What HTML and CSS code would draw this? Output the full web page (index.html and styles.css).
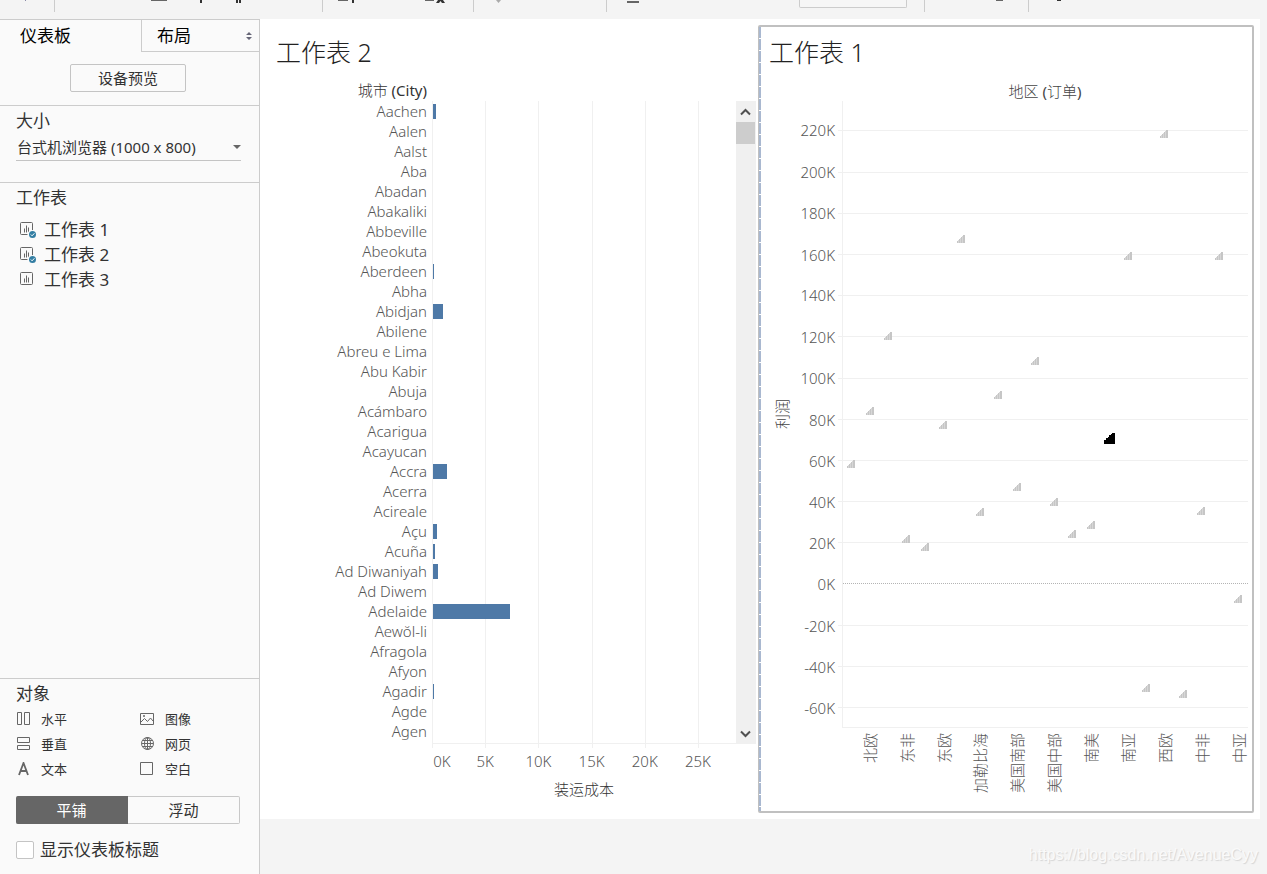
FILE: index.html
```html
<!DOCTYPE html>
<html lang="zh-CN">
<head>
<meta charset="utf-8">
<meta name="viewport" content="width=device-width, initial-scale=1">
<title>仪表板</title>
<link rel="stylesheet" href="styles.css">
</head>
<body>
<svg class="defs" aria-hidden="true">
  <symbol id="mark" viewBox="0 0 8 8"><path d="M0 6h1v2H0zM2 4h1v4H2zM4 2h1v6H4zM6 0h2v8H6z"/><path opacity=".7" d="M1 5h1v3H1zM3 3h1v5H3zM5 1h1v7H5z"/></symbol>
  <symbol id="mark-picked" viewBox="0 0 11 11"><path d="M0 7h2V5h2V4h1V2h2V1h1V0h3v11H0z"/></symbol>
  <symbol id="sheet" viewBox="0 0 16 16"><path fill="none" stroke="#666" d="M.5 1.500q0-1 1-1h10q1 0 1 1v10q0 1-1 1h-10q-1 0-1-1zM4.500 6.500v4M6.500 3.500v7M8.500 5.500v5"/></symbol>
  <symbol id="used" viewBox="0 0 16 16"><circle cx="12" cy="12.500" r="4.500" fill="#fafafa"/><circle cx="12.500" cy="12.500" r="3.500" fill="#337ea3"/><path fill="none" stroke="#fff" d="M10.800 12.500l1.300 1.300 2.300-2.500"/></symbol>
</svg>

<header class="toolbar">
  <div class="group g1"><svg width="54" height="12"><path fill="#8a8aa8" d="M25 0h1v1h-1z"/></svg></div>
  <div class="group g2"><svg width="267" height="12"><path fill="#666" d="M96 0h16v1H96z"/><path fill="#333" d="M145 0h2v3h-2zM181 0h2v3h-2zM184 0h2v3h-2z"/></svg></div>
  <div class="group g3"><svg width="150" height="12"><path fill="#666" d="M15 0h10v1H15zM102 0h9v1h-9z"/><path fill="#333" d="M29 0h2v3h-2zM115 0h5l2 3h-3l-1.500-2-1.500 2h-3z"/></svg></div>
  <div class="group g4"><svg width="132" height="12"><path fill="#aaa" d="M22 0h5l-2.500 3z"/></svg></div>
  <div class="group g5"><svg width="60" height="12"><path fill="#666" d="M20 1h12v2H20z"/></svg><select class="fit" aria-label="适合"><option></option></select></div>
  <div class="group g6"><svg width="103" height="12"><path fill="#666" d="M71 0h7v1h-7z"/></svg></div>
  <div class="group g7"><svg width="60" height="12"><path fill="#333" d="M28 0h4v1h-4z"/></svg></div>
</header>

<div class="workspace">
  <aside class="sidebar">
    <div class="tabs">
      <button class="tab" type="button">仪表板</button>
      <button class="tab tab-off" type="button">布局<svg width="6" height="8" viewBox="0 0 6 8"><path fill="#667" d="M0 3l3-3 3 3zM0 5h6L3 8z"/></svg></button>
    </div>
    <div class="preview"><button type="button">设备预览</button></div>
    <section class="size">
      <label class="heading" for="size">大小</label>
      <div class="size-field">
        <select id="size"><option>台式机浏览器 (1000 x 800)</option></select>
        <svg width="8" height="4" viewBox="0 0 8 4"><path fill="#666" d="M0 0h8L4 4z"/></svg>
      </div>
    </section>
    <section class="sheets">
      <h2 class="heading">工作表</h2>
      <button type="button"><svg width="16" height="16"><use href="#sheet"/><use href="#used"/></svg>工作表 1</button>
      <button type="button"><svg width="16" height="16"><use href="#sheet"/><use href="#used"/></svg>工作表 2</button>
      <button type="button"><svg width="16" height="16"><use href="#sheet"/></svg>工作表 3</button>
    </section>
    <section class="objects">
      <h2 class="heading">对象</h2>
      <div class="object-grid">
        <button type="button"><svg width="15" height="14"><path fill="none" stroke="#666" d="M1.500.5h4v12h-4zM8.500.5h5v12h-5z"/></svg>水平</button>
        <button type="button"><svg width="15" height="14"><path fill="none" stroke="#666" d="M.5 1.500h13v11H.5zM1 10l3.500-3.500 3 3 3-3.500L13 9"/><circle cx="4" cy="4" r="1" fill="#666"/></svg>图像</button>
        <button type="button"><svg width="15" height="14"><path fill="none" stroke="#666" d="M1.500.5h12v5h-12zM1.500 8.500h12v4h-12z"/></svg>垂直</button>
        <button type="button"><svg width="15" height="14"><g fill="none" stroke="#666"><circle cx="7.500" cy="6.500" r="6"/><ellipse cx="7.500" cy="6.500" rx="3" ry="6"/><path d="M7.500.5v12M1.500 6.500h12M2.500 3.500h10M2.500 9.500h10"/></g></svg>网页</button>
        <button type="button"><svg width="15" height="14"><path fill="none" stroke="#666" stroke-width="1.800" d="M3 13L7.500 1 12 13M4.500 9h6"/></svg>文本</button>
        <button type="button"><svg width="15" height="14"><path fill="none" stroke="#666" d="M.5.5h12v12H.5z"/></svg>空白</button>
      </div>
      <div class="segmented">
        <button class="on" type="button">平铺</button>
        <button type="button">浮动</button>
      </div>
      <label class="show-title"><input type="checkbox">显示仪表板标题</label>
    </section>
  </aside>

  <main class="canvas">
    <div class="dashboard">
      <section class="view">
        <h1 class="title">工作表 2</h1>
        <div class="bar-head">城市 <b>(City)</b></div>
        <div class="bar-area">
          <div class="bar-plot">
            <div class="bar-grid"><i></i><i></i><i></i><i></i><i></i><i></i></div>
            <div class="row"><span>Aachen</span><div><div class="bar" style="width:1%"></div></div></div>
            <div class="row"><span>Aalen</span></div>
            <div class="row"><span>Aalst</span></div>
            <div class="row"><span>Aba</span></div>
            <div class="row"><span>Abadan</span></div>
            <div class="row"><span>Abakaliki</span></div>
            <div class="row"><span>Abbeville</span></div>
            <div class="row"><span>Abeokuta</span></div>
            <div class="row"><span>Aberdeen</span><div><div class="bar" style="width:0.3%"></div></div></div>
            <div class="row"><span>Abha</span></div>
            <div class="row"><span>Abidjan</span><div><div class="bar" style="width:3.300%"></div></div></div>
            <div class="row"><span>Abilene</span></div>
            <div class="row"><span>Abreu e Lima</span></div>
            <div class="row"><span>Abu Kabir</span></div>
            <div class="row"><span>Abuja</span></div>
            <div class="row"><span>Acámbaro</span></div>
            <div class="row"><span>Acarigua</span></div>
            <div class="row"><span>Acayucan</span></div>
            <div class="row"><span>Accra</span><div><div class="bar" style="width:4.600%"></div></div></div>
            <div class="row"><span>Acerra</span></div>
            <div class="row"><span>Acireale</span></div>
            <div class="row"><span>Açu</span><div><div class="bar" style="width:1.300%"></div></div></div>
            <div class="row"><span>Acuña</span><div><div class="bar" style="width:0.700%"></div></div></div>
            <div class="row"><span>Ad Diwaniyah</span><div><div class="bar" style="width:1.700%"></div></div></div>
            <div class="row"><span>Ad Diwem</span></div>
            <div class="row"><span>Adelaide</span><div><div class="bar" style="width:25.400%"></div></div></div>
            <div class="row"><span>Aewŏl-li</span></div>
            <div class="row"><span>Afragola</span></div>
            <div class="row"><span>Afyon</span></div>
            <div class="row"><span>Agadir</span><div><div class="bar" style="width:0.3%"></div></div></div>
            <div class="row"><span>Agde</span></div>
            <div class="row"><span>Agen</span></div>
          </div>
          <div class="scrollbar">
            <button type="button" aria-label="向上滚动"><svg width="11" height="8"><path fill="none" stroke="#505050" stroke-width="2" d="M1 6.500l4.500-4.500L10 6.500"/></svg></button>
            <div class="thumb"></div>
            <button class="down" type="button" aria-label="向下滚动"><svg width="11" height="8"><path fill="none" stroke="#505050" stroke-width="2" d="M1 1.500L5.500 6 10 1.500"/></svg></button>
          </div>
        </div>
        <div class="bar-axis"><span>0K</span><span>5K</span><span>10K</span><span>15K</span><span>20K</span><span>25K</span></div>
        <div class="bar-caption">装运成本</div>
      </section>

      <section class="view selected">
        <h1 class="title">工作表 1</h1>
        <div class="region-head">地区 <b>(</b>订单<b>)</b></div>
        <div class="scatter">
          <div class="y-title"><span>利润</span></div>
          <div class="y-axis">
            <span style="top:4.700%">220K</span><span style="top:11.300%">200K</span><span style="top:17.900%">180K</span><span style="top:24.500%">160K</span><span style="top:31%">140K</span><span style="top:37.600%">120K</span><span style="top:44.200%">100K</span><span style="top:50.800%">80K</span><span style="top:57.400%">60K</span><span style="top:63.900%">40K</span><span style="top:70.500%">20K</span><span style="top:77%">0K</span><span style="top:83.700%">-20K</span><span style="top:90.300%">-40K</span><span style="top:96.800%">-60K</span>
          </div>
          <div class="points">
            <i style="top:4.700%"></i><i style="top:11.300%"></i><i style="top:17.900%"></i><i style="top:24.500%"></i><i style="top:31%"></i><i style="top:37.600%"></i><i style="top:44.200%"></i><i style="top:50.800%"></i><i style="top:57.400%"></i><i style="top:63.900%"></i><i style="top:70.500%"></i><i class="zero" style="top:77%"></i><i style="top:83.700%"></i><i style="top:90.300%"></i><i style="top:96.800%"></i>
            <svg style="left:2.300%;top:58%"><use href="#mark"/></svg>
            <svg style="left:6.800%;top:49.500%"><use href="#mark"/></svg>
            <svg style="left:11.400%;top:37.600%"><use href="#mark"/></svg>
            <svg style="left:15.900%;top:69.900%"><use href="#mark"/></svg>
            <svg style="left:20.500%;top:71.200%"><use href="#mark"/></svg>
            <svg style="left:25%;top:51.800%"><use href="#mark"/></svg>
            <svg style="left:29.500%;top:22.100%"><use href="#mark"/></svg>
            <svg style="left:34.100%;top:65.700%"><use href="#mark"/></svg>
            <svg style="left:38.600%;top:47%"><use href="#mark"/></svg>
            <svg style="left:43.200%;top:61.700%"><use href="#mark"/></svg>
            <svg style="left:47.700%;top:41.500%"><use href="#mark"/></svg>
            <svg style="left:52.300%;top:64.100%"><use href="#mark"/></svg>
            <svg style="left:56.800%;top:69.200%"><use href="#mark"/></svg>
            <svg style="left:61.400%;top:67.800%"><use href="#mark"/></svg>
            <svg class="picked" style="left:65.900%;top:53.900%"><use href="#mark-picked"/></svg>
            <svg style="left:70.500%;top:24.700%"><use href="#mark"/></svg>
            <svg style="left:75%;top:93.700%"><use href="#mark"/></svg>
            <svg style="left:79.500%;top:5.200%"><use href="#mark"/></svg>
            <svg style="left:84.100%;top:94.800%"><use href="#mark"/></svg>
            <svg style="left:88.600%;top:65.500%"><use href="#mark"/></svg>
            <svg style="left:93.200%;top:24.800%"><use href="#mark"/></svg>
            <svg style="left:97.700%;top:79.500%"><use href="#mark"/></svg>
          </div>
          <div class="x-axis">
            <div><span>北欧</span></div><div><span>东非</span></div><div><span>东欧</span></div><div><span>加勒比海</span></div><div><span>美国南部</span></div><div><span>美国中部</span></div><div><span>南美</span></div><div><span>南亚</span></div><div><span>西欧</span></div><div><span>中非</span></div><div><span>中亚</span></div>
          </div>
        </div>
      </section>
    </div>
    <footer class="watermark">https://blog.csdn.net/AvenueCyy</footer>
  </main>
</div>
</body>
</html>
```
FILE: styles.css
```css
* { box-sizing: border-box; }
body {
  margin: 0;
  min-height: 100vh;
  display: flex;
  flex-direction: column;
  background: #f4f4f4;
  color: #333;
  font-family: "Noto Sans", "Noto Sans CJK SC", sans-serif;
  font-size: 15px;
  line-height: 20px;
}
button, select, input { font: inherit; color: inherit; margin: 0; }
button { background: none; border: 0; padding: 0; }
h1, h2 { margin: 0; font-weight: 400; }
svg { display: block; flex: none; }
.defs { position: absolute; width: 0; height: 0; }

.toolbar { display: flex; height: 19px; overflow: hidden; }
.group { display: flex; flex: none; height: 12px; border-right: 1px solid #ccc; }
.g1 { width: 55px; }
.g2 { width: 268px; }
.g3 { width: 151px; }
.g4 { width: 133px; }
.g5 { width: 318px; justify-content: space-between; padding-right: 17px; }
.g6 { width: 104px; }
.g7 { border: 0; }
.fit {
  appearance: none;
  width: 108px;
  height: 8px;
  padding: 0;
  border: 1px solid #ccc;
  border-top: 0;
  border-radius: 0 0 2px 2px;
  background: #f6f6f6;
}

.workspace { flex: 1; display: flex; }
.sidebar {
  width: 260px;
  flex: none;
  display: flex;
  flex-direction: column;
  background: #fafafa;
  border-top: 1px solid #ccc;
  border-right: 1px solid #ccc;
}
.heading { display: block; font-size: 17px; line-height: 24px; }
.tabs { display: grid; grid-template-columns: 141fr 118fr; height: 32px; color: #000; font-size: 17px; }
.tab { padding-left: 20px; text-align: left; }
.tab-off {
  display: flex;
  align-items: center;
  justify-content: space-between;
  padding: 0 7px 0 15px;
  border-left: 1px solid #ccc;
  border-bottom: 1px solid #ccc;
}
.preview { display: flex; justify-content: center; padding: 12px 3px 13px 0; }
.preview button {
  width: 116px;
  height: 28px;
  border: 1px solid #c4c4c4;
  border-radius: 2px;
}
.size { border-top: 1px solid #ccc; padding: 3px 18px 21px 16px; }
.size-field { position: relative; border-bottom: 1px solid #c4c4c4; }
.size-field select {
  appearance: none;
  width: 100%;
  height: 27px;
  padding: 0 16px 0 1px;
  border: 0;
  background: transparent;
}
.size-field svg { position: absolute; right: 0; top: 12px; pointer-events: none; }
.sheets {
  flex: 1;
  display: flex;
  flex-direction: column;
  border-top: 1px solid #ccc;
  padding: 3px 16px;
  font-size: 17px;
}
.sheets .heading { margin-bottom: 7px; }
.sheets button { display: flex; align-items: center; gap: 8px; height: 25px; padding-left: 4px; }
.objects { border-top: 1px solid #ccc; padding: 3px 19px 13px 16px; }
.object-grid { display: grid; grid-template-columns: 124px 1fr; font-size: 13px; }
.object-grid button { display: flex; align-items: center; gap: 10px; height: 25px; }
.segmented { display: flex; height: 28px; margin: 15px 0; }
.segmented button { flex: 1; border: 1px solid #c8c8c8; border-left: 0; border-radius: 0 2px 2px 0; }
.segmented .on { background: #666; border-color: #666; color: #fff; border-radius: 2px 0 0 2px; }
.show-title { display: flex; align-items: center; gap: 6px; font-size: 17px; line-height: 22px; }
.show-title input {
  appearance: none;
  width: 18px;
  height: 18px;
  background: #fff;
  border: 1px solid #c4c4c4;
  border-radius: 2px;
}

.canvas { flex: 1; min-width: 0; display: flex; flex-direction: column; }
.dashboard {
  flex: 1;
  display: grid;
  grid-template-columns: minmax(0, 498fr) minmax(0, 496fr);
  margin-right: 7px;
  padding: 6px 6px 6px 0;
  background: #fff;
}
.view { position: relative; display: flex; flex-direction: column; padding: 10px 0 0; font-weight: 300; color: #444; }
.title { font-size: 25px; line-height: 34px; margin: 0 16px 12px; font-weight: 300; color: #222; }
.view b { font-weight: 400; }
.selected { border: 2px solid #c0c0c0; border-left-width: 1px; border-radius: 2px; padding: 8px 4px 0 1px; }
.selected .title { margin-left: 9px; }
.selected::before {
  content: "";
  position: absolute;
  inset: 0 auto 0 0;
  width: 2px;
  background: repeating-linear-gradient(#a9b8d0 0 11px, #fff 11px 12px);
}

.bar-head { width: 167px; padding-bottom: 2px; line-height: 18px; text-align: right; color: #333; white-space: nowrap; }
.bar-area { display: flex; }
.bar-plot { position: relative; flex: 1; padding-bottom: 3px; color: #555; }
.bar-grid {
  position: absolute;
  inset: 0 0 -4px 172px;
  display: grid;
  grid-template-columns: repeat(5, 17.5%) 1fr;
}
.bar-grid i { border-left: 1px solid #f0f0f0; }
.bar-plot::after {
  content: "";
  position: absolute;
  inset: auto 0 0 172px;
  border-bottom: 1px solid #f0f0f0;
}
.row { position: relative; display: grid; grid-template-columns: 167px 1fr; column-gap: 6px; height: 20px; align-items: center; }
.row span { text-align: right; }
.bar { height: 15px; min-width: 1px; background: #4e79a7; }
.scrollbar { display: flex; flex-direction: column; width: 20px; margin-right: 2px; background: #f0f0f0; }
.scrollbar button { display: flex; align-items: center; justify-content: center; height: 21px; padding-right: 1px; }
.thumb { height: 22px; margin-right: 1px; background: #cdcdcd; }
.scrollbar .down { margin-top: auto; }
.bar-axis {
  display: grid;
  grid-template-columns: repeat(6, 17.5%);
  margin: 7px 22px 8px 172px;
  color: #555;
  text-align: center;
}
.bar-axis span { width: 52px; margin-left: -26px; }
.bar-axis span:first-child { padding-left: 20px; }
.bar-caption { margin-left: 150px; text-align: center; color: #333; }

.region-head { margin-left: 82px; text-align: center; color: #444; }
.scatter {
  flex: 1;
  display: grid;
  grid-template-columns: 44px 38px minmax(0, 1fr);
  grid-template-rows: 1fr 83px;
}
.y-title { display: flex; align-items: center; justify-content: center; }
.y-title span, .x-axis span {
  writing-mode: vertical-rl;
  text-orientation: sideways;
  transform: rotate(180deg);
}
.y-axis { position: relative; color: #555; }
.y-axis span { position: absolute; right: 7px; margin-top: -10px; white-space: nowrap; }
.points { position: relative; border-left: 1px solid #f0f0f0; border-bottom: 1px solid #f0f0f0; }
.points i { position: absolute; left: -5px; right: 0; border-top: 1px solid #f0f0f0; }
.points .zero { left: 0; border-top: 1px dotted #b4b4b4; }
.points svg { position: absolute; width: 8px; height: 8px; margin: -4px 0 0 -5px; fill: #c6c6c6; }
.points .picked { width: 11px; height: 11px; margin: -5px 0 0 -6px; fill: #000; }
.x-axis {
  grid-column: 3;
  display: grid;
  grid-template-columns: repeat(11, 1fr);
  align-items: start;
  padding-top: 5px;
  color: #555;
}
.x-axis div { display: flex; justify-content: center; justify-self: end; width: 50%; }

.watermark {
  height: 55px;
  padding: 26px 9px 0 0;
  text-align: right;
  font-family: "Liberation Sans", Arial, sans-serif;
  font-size: 16px;
  color: #fafafa;
  text-shadow: 1px 1px 1px #d4d4d4;
}
```
